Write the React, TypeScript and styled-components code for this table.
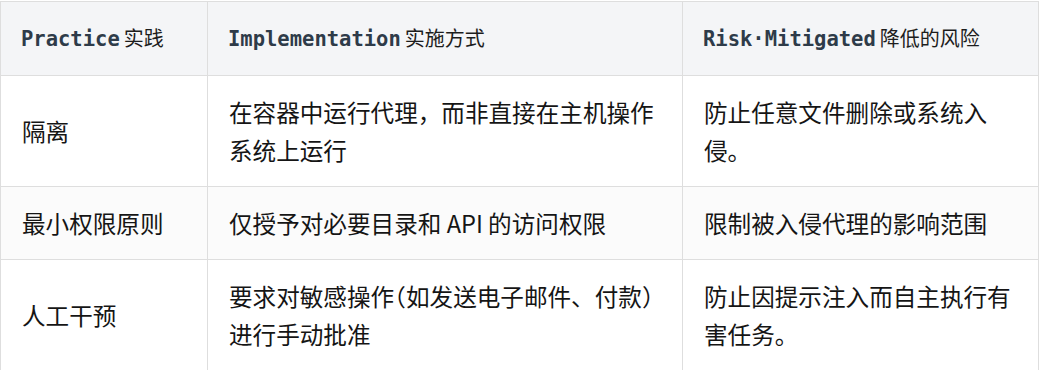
import React from "react";
import styled, { createGlobalStyle } from "styled-components";

const GlobalStyle = createGlobalStyle`
  html, body { margin: 0; padding: 0; background: #ffffff; }
  body { font-family: "Noto Sans CJK SC", "Noto Sans", sans-serif; }
`;

const Wrapper = styled.div`
  padding-top: 1px;
  width: 1038px;
`;

const Table = styled.table`
  width: 1038px;
  border-collapse: collapse;
  table-layout: fixed;
`;

const Th = styled.th`
  background: #f4f5f7;
  border: 1px solid #dedede;
  padding: 17px 20px;
  height: 38px;
  text-align: left;
  font-weight: normal;
  line-height: 38px;
  font-size: 20px;
  white-space: nowrap;
`;

const HeadLatin = styled.span`
  font-family: "DejaVu Sans Mono", "Liberation Mono", monospace;
  font-weight: 700;
  font-size: 20.5px;
  color: #2e3b49;
`;

const HeadCjk = styled.span`
  font-family: "Noto Sans CJK SC", sans-serif;
  color: #1d1d1d;
  margin-left: 4px;
`;

const Tr = styled.tr<{ $alt?: boolean }>`
  background: ${(p) => (p.$alt ? "#fbfbfb" : "#ffffff")};
`;

const Td = styled.td`
  border: 1px solid #dedede;
  padding: 17px 20px 17px 21px;
  font-family: "Noto Sans CJK SC", sans-serif;
  font-size: 23.6px;
  line-height: 38px;
  color: #151515;
  vertical-align: middle;
  word-break: break-all;
`;

const Punct = styled.span`
  font-feature-settings: "halt" 1;
`;

type Cell = React.ReactNode;

const rows: { alt?: boolean; cells: Cell[] }[] = [
  {
    cells: [
      "隔离",
      "在容器中运行代理，而非直接在主机操作系统上运行",
      "防止任意文件删除或系统入侵。",
    ],
  },
  {
    alt: true,
    cells: ["最小权限原则", "仅授予对必要目录和 API 的访问权限", "限制被入侵代理的影响范围"],
  },
  {
    cells: [
      "人工干预",
      <>
        要求对敏感操作<Punct>（</Punct>如发送电子邮件、付款<Punct>）</Punct>进行手动批准
      </>,
      "防止因提示注入而自主执行有害任务。",
    ],
  },
];

export default function App() {
  return (
    <Wrapper>
      <GlobalStyle />
      <Table>
        <colgroup>
          <col style={{ width: 207 }} />
          <col style={{ width: 475 }} />
          <col style={{ width: 356 }} />
        </colgroup>
        <thead>
          <tr>
            <Th>
              <HeadLatin>Practice</HeadLatin>
              <HeadCjk>实践</HeadCjk>
            </Th>
            <Th>
              <HeadLatin>Implementation</HeadLatin>
              <HeadCjk>实施方式</HeadCjk>
            </Th>
            <Th>
              <HeadLatin>Risk·Mitigated</HeadLatin>
              <HeadCjk>降低的风险</HeadCjk>
            </Th>
          </tr>
        </thead>
        <tbody>
          {rows.map((r, i) => (
            <Tr key={i} $alt={r.alt}>
              {r.cells.map((c, j) => (
                <Td key={j}>{c}</Td>
              ))}
            </Tr>
          ))}
        </tbody>
      </Table>
    </Wrapper>
  );
}
